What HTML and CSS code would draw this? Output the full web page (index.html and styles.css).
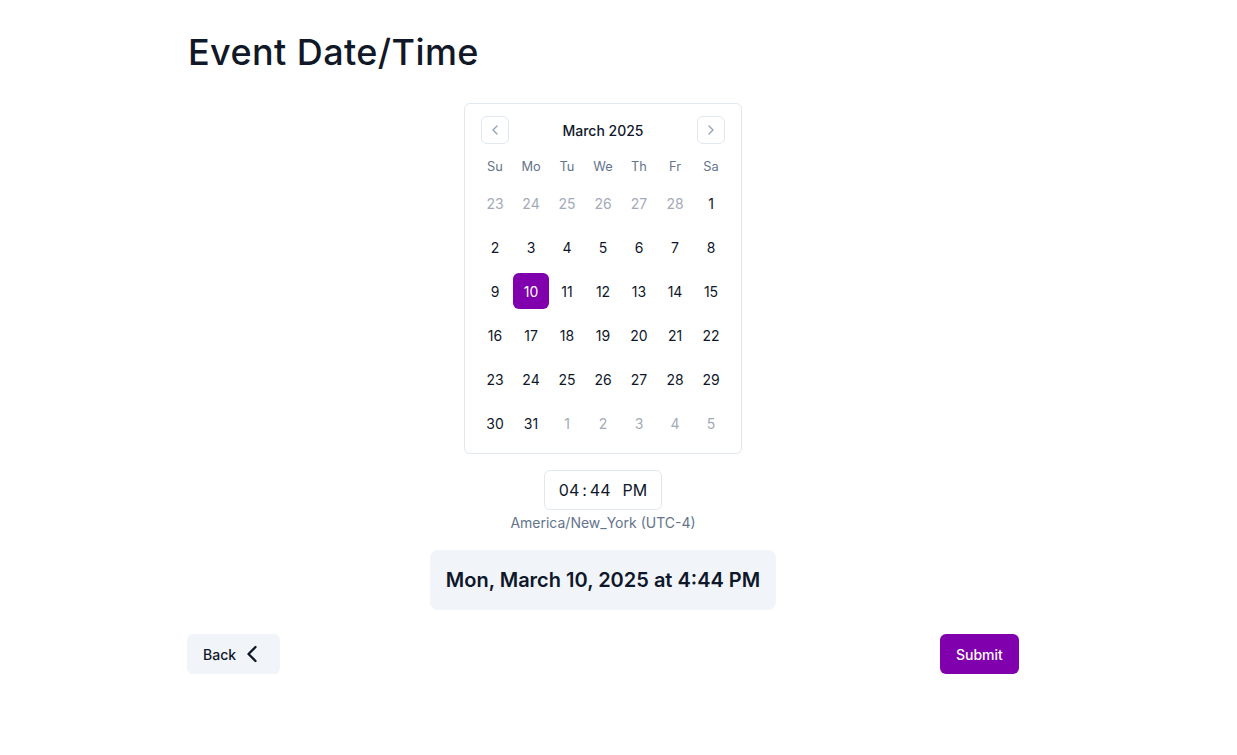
FILE: index.html
```html
<!DOCTYPE html>
<html>
<head>
<meta charset="utf-8">
<link rel="stylesheet" href="styles.css">
</head>
<body>
<div class="page">
  <h1 class="title">Event Date/Time</h1>
  <div class="center">
    <div class="calendar">
      <div class="caption">
        <button class="nav"><svg width="16" height="16" viewBox="0 0 24 24" fill="none" stroke="currentColor" stroke-width="2" stroke-linecap="round" stroke-linejoin="round"><path d="m15 18-6-6 6-6"/></svg></button>
        <div class="month">March 2025</div>
        <button class="nav"><svg width="16" height="16" viewBox="0 0 24 24" fill="none" stroke="currentColor" stroke-width="2" stroke-linecap="round" stroke-linejoin="round"><path d="m9 18 6-6-6-6"/></svg></button>
      </div>
      <div class="head">
        <div>Su</div><div>Mo</div><div>Tu</div><div>We</div><div>Th</div><div>Fr</div><div>Sa</div>
      </div>
      <div class="week"><div class="out">23</div><div class="out">24</div><div class="out">25</div><div class="out">26</div><div class="out">27</div><div class="out">28</div><div>1</div></div>
      <div class="week"><div>2</div><div>3</div><div>4</div><div>5</div><div>6</div><div>7</div><div>8</div></div>
      <div class="week"><div>9</div><div class="sel">10</div><div>11</div><div>12</div><div>13</div><div>14</div><div>15</div></div>
      <div class="week"><div>16</div><div>17</div><div>18</div><div>19</div><div>20</div><div>21</div><div>22</div></div>
      <div class="week"><div>23</div><div>24</div><div>25</div><div>26</div><div>27</div><div>28</div><div>29</div></div>
      <div class="week"><div>30</div><div>31</div><div class="out">1</div><div class="out">2</div><div class="out">3</div><div class="out">4</div><div class="out">5</div></div>
    </div>
    <div class="time"><span>04</span><span class="colon">:</span><span>44</span><span class="ampm">PM</span></div>
    <div class="tz">America/New_York (UTC-4)</div>
    <div class="summary">Mon, March 10, 2025 at 4:44 PM</div>
  </div>
  <div class="actions">
    <button class="back">Back <svg width="28" height="28" viewBox="0 0 24 24" fill="none" stroke="currentColor" stroke-width="2" stroke-linecap="round" stroke-linejoin="round"><path d="m15 18-6-6 6-6"/></svg></button>
    <button class="submit">Submit</button>
  </div>
</div>
</body>
</html>
```
FILE: styles.css
```css
* { box-sizing: border-box; }
body {
  margin: 0;
  background: #fff;
  font-family: Inter, "Liberation Sans", sans-serif;
  color: #0f172a;
}
.page {
  width: 832px;
  margin-left: 187px;
  padding-top: 30px;
}
.title {
  margin: 0 0 0 1px;
  font-size: 36px;
  font-weight: 500;
  line-height: 44px;
  letter-spacing: 0.4px;
  color: #111827;
}
.center {
  display: flex;
  flex-direction: column;
  align-items: center;
  margin-top: 29px;
}
.calendar {
  width: 278px;
  border: 1px solid #e2e8f0;
  border-radius: 6px;
  padding: 12px;
}
.caption {
  display: flex;
  align-items: center;
  justify-content: space-between;
  height: 28px;
  padding: 0 4px;
}
.nav {
  width: 28px;
  height: 28px;
  border: 1px solid #e2e8f0;
  border-radius: 6px;
  background: #fff;
  display: flex;
  align-items: center;
  justify-content: center;
  padding: 0;
  color: #94a3b8;
}
.month {
  font-size: 14px;
  font-weight: 500;
}
.head {
  display: grid;
  grid-template-columns: repeat(7, 36px);
  margin-top: 13px;
  height: 20px;
  line-height: 20px;
  font-size: 12.8px;
  color: #64748b;
  text-align: center;
}
.week {
  display: grid;
  grid-template-columns: repeat(7, 36px);
  margin-top: 8px;
  font-size: 14px;
  text-align: center;
}
.week div {
  height: 36px;
  line-height: 38px;
  border-radius: 6px;
  overflow: hidden;
}
.week .out { color: #a3abb8; }
.week .sel {
  background: #8000ad;
  color: #fff;
}
.time {
  margin-top: 16px;
  width: 118px;
  height: 40px;
  border: 1px solid #e2e8f0;
  border-radius: 6px;
  display: flex;
  align-items: center;
  justify-content: center;
  font-size: 16px;
  color: #0f172a;
}
.colon { margin: 0 3px; }
.ampm { margin-left: 12px; }
.tz {
  margin-top: 3px;
  font-size: 14px;
  line-height: 20px;
  color: #64748b;
}
.summary {
  margin-top: 17px;
  background: #f1f5f9;
  border-radius: 8px;
  padding: 0 16px;
  height: 60px;
  line-height: 60px;
  font-size: 20px;
  font-weight: 600;
  color: #0f172a;
}
.actions {
  display: flex;
  justify-content: space-between;
  margin-top: 24px;
}
button { font-family: inherit; cursor: pointer; }
.back, .submit {
  height: 40px;
  border: none;
  border-radius: 6px;
  font-size: 14px;
  font-weight: 500;
  padding: 0 16px;
  display: flex;
  align-items: center;
}
.back {
  background: #f1f5f9;
  color: #0f172a;
  gap: 2px;
  width: 93px;
  padding-right: 0;
}
.submit {
  background: #8000ad;
  color: #fff;
  width: 79px;
}
```
